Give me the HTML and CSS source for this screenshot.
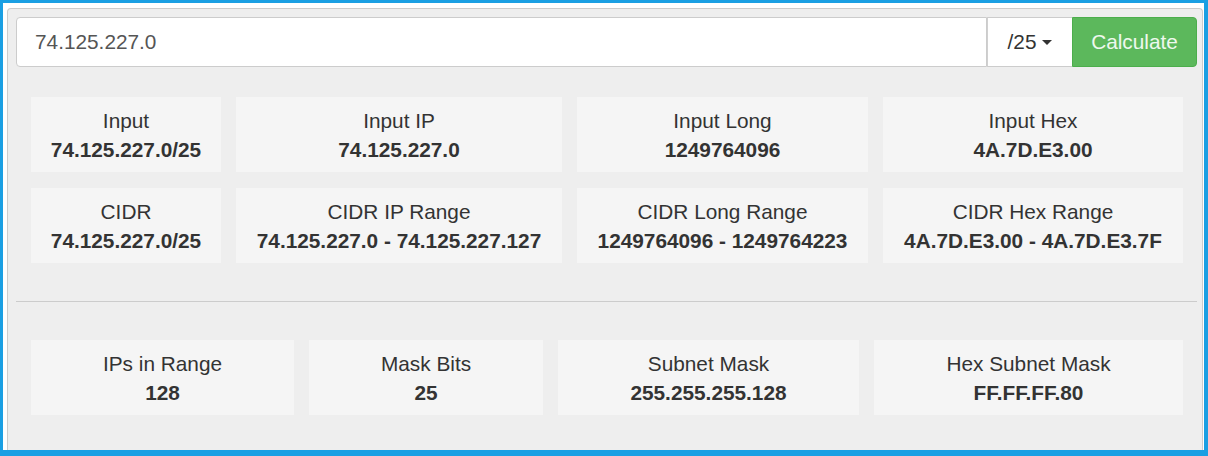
FILE: index.html
```html
<!DOCTYPE html>
<html>
<head>
<meta charset="utf-8">
<link rel="stylesheet" href="styles.css">
</head>
<body>
<div class="frame">
  <div class="panel">
    <div class="input-group">
      <div class="ip-input">74.125.227.0</div>
      <div class="mask-select">/25 <span class="caret"></span></div>
      <div class="calc-btn">Calculate</div>
    </div>
    <div class="grid grid-top">
      <div class="card"><div class="label">Input</div><div class="value">74.125.227.0/25</div></div>
      <div class="card"><div class="label">Input IP</div><div class="value">74.125.227.0</div></div>
      <div class="card"><div class="label">Input Long</div><div class="value">1249764096</div></div>
      <div class="card"><div class="label">Input Hex</div><div class="value">4A.7D.E3.00</div></div>
      <div class="card"><div class="label">CIDR</div><div class="value">74.125.227.0/25</div></div>
      <div class="card"><div class="label">CIDR IP Range</div><div class="value">74.125.227.0 - 74.125.227.127</div></div>
      <div class="card"><div class="label">CIDR Long Range</div><div class="value">1249764096 - 1249764223</div></div>
      <div class="card"><div class="label">CIDR Hex Range</div><div class="value">4A.7D.E3.00 - 4A.7D.E3.7F</div></div>
    </div>
    <div class="divider"></div>
    <div class="grid grid-bottom">
      <div class="card"><div class="label">IPs in Range</div><div class="value">128</div></div>
      <div class="card"><div class="label">Mask Bits</div><div class="value">25</div></div>
      <div class="card"><div class="label">Subnet Mask</div><div class="value">255.255.255.128</div></div>
      <div class="card"><div class="label">Hex Subnet Mask</div><div class="value">FF.FF.FF.80</div></div>
    </div>
  </div>
</div>
</body>
</html>
```

FILE: styles.css
```css
* { box-sizing: border-box; }
html, body { margin: 0; padding: 0; }
body {
  font-family: "Liberation Sans", Arial, Helvetica, sans-serif;
  color: #333;
  background: #fff;
}
.frame {
  width: 1208px;
  height: 456px;
  border-style: solid;
  border-color: #1a9fe3;
  border-width: 3px 4px 6px 3px;
  background: #fff;
  padding: 5px 1px 0 4px;
  display: flex;
  flex-direction: column;
}
.panel {
  flex: 1;
  background: #eeeeee;
  border: 1px solid #cccccc;
  border-bottom: none;
  border-radius: 4px 4px 0 0;
  padding: 8px 5px 0 8px;
}
.input-group {
  display: flex;
  height: 50px;
  font-size: 20.8px;
}
.ip-input {
  flex: 1;
  background: #fff;
  border: 1px solid #cccccc;
  border-radius: 4px 0 0 4px;
  color: #555;
  padding-left: 18px;
  display: flex;
  align-items: center;
}
.mask-select {
  width: 85px;
  background: #fff;
  border: 1px solid #cccccc;
  border-left: 1px solid #d0d0d0;
  border-right: none;
  display: flex;
  align-items: center;
  justify-content: center;
  gap: 6px;
  color: #333;
}
.caret {
  width: 0;
  height: 0;
  border-top: 5px solid #333;
  border-left: 5px solid transparent;
  border-right: 5px solid transparent;
}
.calc-btn {
  width: 125px;
  background: #5cb85c;
  border: 1px solid #4cae4c;
  border-radius: 0 4px 4px 0;
  color: #eef8ee;
  display: flex;
  align-items: center;
  justify-content: center;
}
.grid {
  display: grid;
  column-gap: 15px;
  row-gap: 16px;
  padding: 0 14px 0 15px;
}
.grid-top {
  margin-top: 30px;
  grid-template-columns: 190fr 326fr 291fr 300fr;
}
.grid-bottom {
  margin-top: 38px;
  grid-template-columns: 263fr 234fr 301fr 309fr;
}
.card {
  background: #f5f5f5;
  height: 75px;
  padding-top: 9px;
  text-align: center;
}
.label {
  font-size: 20.8px;
  line-height: 29px;
}
.value {
  font-size: 20.8px;
  line-height: 30px;
  font-weight: bold;
}
.divider {
  margin-top: 38px;
  height: 1px;
  background: #cccccc;
}
```
